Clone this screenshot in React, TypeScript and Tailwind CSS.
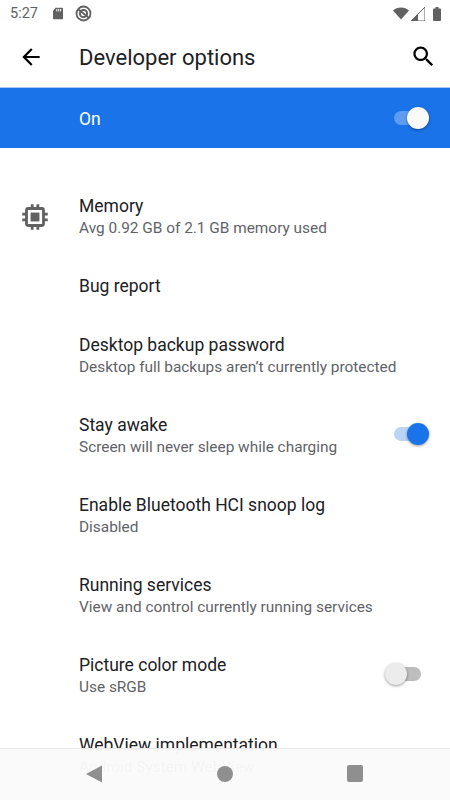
const rows = [
	{ title: 'Memory', summary: 'Avg 0.92 GB of 2.1 GB memory used', icon: true },
	{ title: 'Bug report' },
	{ title: 'Desktop backup password', summary: 'Desktop full backups aren’t currently protected' },
	{ title: 'Stay awake', summary: 'Screen will never sleep while charging', toggle: 'on' },
	{ title: 'Enable Bluetooth HCI snoop log', summary: 'Disabled' },
	{ title: 'Running services', summary: 'View and control currently running services' },
	{ title: 'Picture color mode', summary: 'Use sRGB', toggle: 'off' },
	{ title: 'WebView implementation', summary: 'Android System WebView' },
];

function ChipIcon() {
	return (
		<svg width="34" height="34" viewBox="0 0 24 24" fill="#616161">
			<path d="M15 9H9v6h6V9zm-2 4h-2v-2h2v2zm8-2V9h-2V7c0-1.100-.9-2-2-2h-2V3h-2v2h-2V3H9v2H7c-1.100 0-2 .9-2 2v2H3v2h2v2H3v2h2v2c0 1.100.9 2 2 2h2v2h2v-2h2v2h2v-2h2c1.100 0 2-.9 2-2v-2h2v-2h-2v-2h2zm-4 6H7V7h10v10z" />
			<rect x="9" y="9" width="6" height="6" />
		</svg>
	);
}

function Toggle({ state }: { state: string }) {
	if (state === 'on') {
		return (
			<div className="relative w-[36px] h-[22px] mb-[4px]">
				<div className="absolute left-[1px] right-[4px] top-[4px] h-[14px] rounded-full bg-[#bcd3f8]" />
				<div className="absolute right-0 top-0 w-[22px] h-[22px] rounded-full bg-[#1a73e8] shadow-[0_1px_3px_rgba(0,0,0,0.4)]" />
			</div>
		);
	}
	return (
		<div className="relative w-[36px] h-[22px] mr-[8px] mb-[4px]">
			<div className="absolute left-[2px] right-0 top-[4px] h-[14px] rounded-full bg-[#bdbdbd]" />
			<div className="absolute left-0 top-0 w-[22px] h-[22px] rounded-full bg-[#ececec] shadow-[0_1px_3px_rgba(0,0,0,0.4)]" />
		</div>
	);
}

function StatusBar() {
	return (
		<div className="h-[27px] flex items-center justify-between pl-[10px] pr-[9px] text-[#5f6368]">
			<div className="flex items-center">
				<span className="text-[14.500px] leading-none mt-[1px]">5:27</span>
				<svg className="ml-[15px]" width="10" height="13" viewBox="0 0 12 14" fill="#616161">
					<path d="M3 0h8a1 1 0 0 1 1 1v12a1 1 0 0 1-1 1H1a1 1 0 0 1-1-1V4z" />
					<rect x="4" y="1.500" width="1.200" height="3" fill="#fff" />
					<rect x="6.300" y="1.500" width="1.200" height="3" fill="#fff" />
					<rect x="8.600" y="1.500" width="1.200" height="3" fill="#fff" />
				</svg>
				<svg className="ml-[12px]" width="17" height="17" viewBox="0 0 17 17" fill="none" stroke="#616161">
					<circle cx="8.500" cy="8.500" r="7" strokeWidth="1.800" />
					<circle cx="8.500" cy="8.500" r="3.600" strokeWidth="2" />
					<path d="M3.500 4.500l10 8" strokeWidth="1.800" />
				</svg>
			</div>
			<div className="flex items-center gap-[2px]">
				<svg width="16" height="13" viewBox="0 0 17 13" fill="#616161">
					<path d="M0 3.200C2.200 1.200 5.200 0 8.500 0S14.800 1.200 17 3.200L8.500 13z" />
				</svg>
				<svg width="14" height="14" viewBox="0 0 14 14">
					<path d="M0 14L14 0v14z" fill="#fff" stroke="#616161" />
					<path d="M0 14L7 7v7z" fill="#616161" />
				</svg>
				<svg className="ml-[6px]" width="8" height="14" viewBox="0 0 8 14" fill="#616161">
					<path d="M2.500 0h3v1.500H7a1 1 0 0 1 1 1V13a1 1 0 0 1-1 1H1a1 1 0 0 1-1-1V2.500a1 1 0 0 1 1-1h1.500z" />
				</svg>
			</div>
		</div>
	);
}

export default function App() {
	return (
		<div className="relative w-[450px] h-[800px] overflow-hidden bg-white font-['Roboto',sans-serif]">
			<StatusBar />
			<div className="h-[60px] flex items-center">
				<svg className="ml-[18px] mb-[1px]" width="26" height="26" viewBox="0 0 24 24" fill="#000">
					<path d="M20 11H7.830l5.590-5.590L12 4l-8 8 8 8 1.410-1.410L7.830 13H20v-2z" />
				</svg>
				<div className="ml-[35px] text-[22px] text-[#202124] flex-1">Developer options</div>
				<svg className="mr-[13px] mb-[2px]" width="27" height="27" viewBox="0 0 24 24" fill="#000">
					<path d="M15.500 14h-.79l-.28-.27C15.410 12.590 16 11.110 16 9.500 16 5.910 13.090 3 9.500 3S3 5.910 3 9.500 5.910 16 9.500 16c1.610 0 3.090-.59 4.230-1.570l.27.28v.79l5 4.990L20.490 19l-4.990-5zm-6 0C7.010 14 5 11.990 5 9.500S7.010 5 9.500 5 14 7.010 14 9.500 11.990 14 9.500 14z" />
				</svg>
			</div>
			<div className="h-[61px] bg-[#1a73e8] border-t border-[#aec9ef] flex items-center pl-[79px] pr-[21px] justify-between">
				<span className="text-white text-[17.500px] mt-[2px]">On</span>
				<div className="relative w-[36px] h-[22px]">
					<div className="absolute left-[1px] right-[4px] top-[4px] h-[14px] rounded-full bg-[#5f9bf0]" />
					<div className="absolute right-0 top-0 w-[22px] h-[22px] rounded-full bg-[#fafafa] shadow-[0_1px_3px_rgba(0,0,0,0.4)]" />
				</div>
			</div>
			<div className="pt-[29px]">
				{rows.map((row) => (
					<div key={row.title} className={`relative flex items-center pl-[79px] pr-[21px] ${row.icon ? 'h-[79px]' : row.summary ? 'h-[80px]' : 'h-[60px]'}`}>
						{row.icon && (
							<div className="absolute left-[18px] top-1/2 -translate-y-1/2">
								<ChipIcon />
							</div>
						)}
						<div className="flex-1 min-w-0">
							<div className="text-[17.500px] leading-[23px] text-[#202124]">{row.title}</div>
							{row.summary && <div className="text-[15.400px] leading-[21px] text-[#5f6368]">{row.summary}</div>}
						</div>
						{row.toggle && <Toggle state={row.toggle} />}
					</div>
				))}
			</div>
			<div className="absolute left-0 right-0 bottom-0 h-[52px] bg-[#fafafa]/[0.96] border-t border-[#e8e8e8]">
				<svg className="absolute left-[86px] top-[16px]" width="16" height="18" viewBox="0 0 16 17" fill="#8f8f8f">
					<path d="M16 0v17L0 8.500z" />
				</svg>
				<div className="absolute left-[217px] top-[17px] w-[16px] h-[16px] rounded-full bg-[#8f8f8f]" />
				<div className="absolute left-[347px] top-[16px] w-[16px] h-[17px] rounded-[2px] bg-[#8f8f8f]" />
			</div>
		</div>
	);
}
